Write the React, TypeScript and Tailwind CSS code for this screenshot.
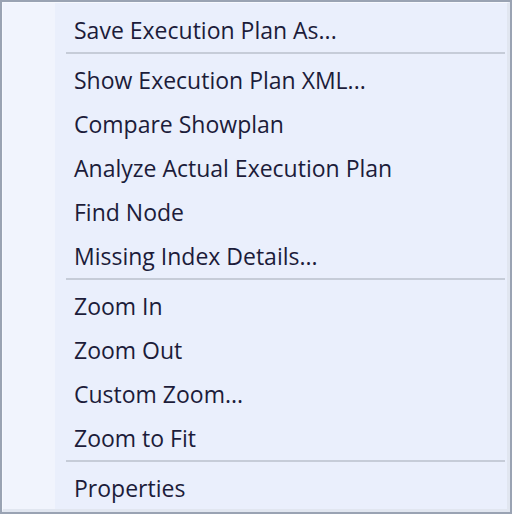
const groups: string[][] = [
  ["Save Execution Plan As..."],
  [
    "Show Execution Plan XML...",
    "Compare Showplan",
    "Analyze Actual Execution Plan",
    "Find Node",
    "Missing Index Details...",
  ],
  ["Zoom In", "Zoom Out", "Custom Zoom...", "Zoom to Fit"],
  ["Properties"],
];

export default function App() {
  return (
    <div className="w-[512px] h-[514px] bg-[#9aa3b3] p-[2px]">
      <div className="flex h-full border-t border-l border-[#f7f9fe] border-r-[3px] border-b-[3px] border-r-[#e1e6f0] border-b-[#e1e6f0]">
        <div className="w-[52px] shrink-0 bg-[#f1f4fd]" />
        <div
          className="flex-1 flex flex-col bg-[#eaeffc] pt-[4px] text-[#1c1c3a] text-[23px]"
          style={{ fontFamily: '"Open Sans", "Noto Sans", sans-serif' }}
        >
          {groups.map((items, gi) => (
            <div key={gi}>
              {gi > 0 && (
                <div className="pt-[1px] pb-[3px] pl-[11px] pr-[2px]">
                  <div className="h-[2px] bg-[#c6ccd8]" />
                </div>
              )}
              {items.map((label) => (
                <div key={label} className="h-[44px] flex items-center pl-[19px] pt-[2px] whitespace-nowrap">
                  {label}
                </div>
              ))}
            </div>
          ))}
        </div>
      </div>
    </div>
  );
}
